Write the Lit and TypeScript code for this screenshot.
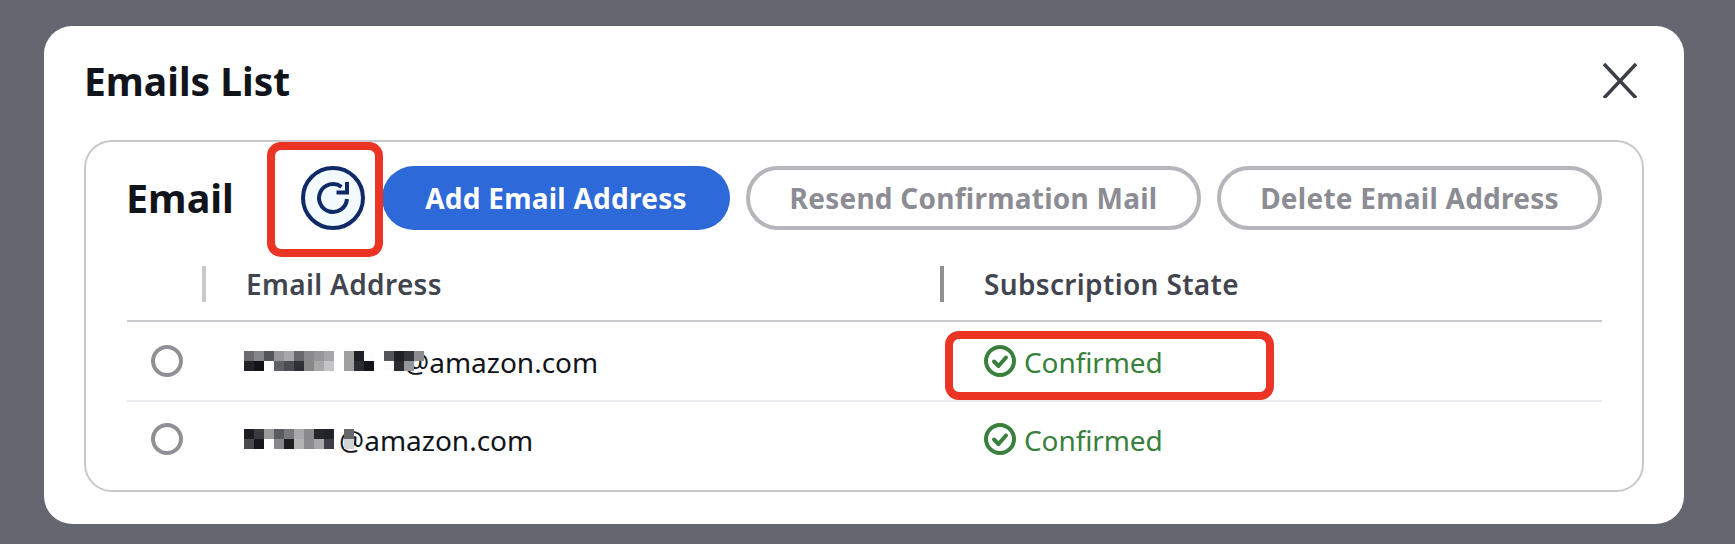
import { LitElement, html, css } from "lit";
import { customElement } from "lit/decorators.js";

type Cell = string | null;
const M1: Cell[][] = [
  ["#6a6b6f","#85868a","#55565b","#97979b","#a8a8aa","#66686c","#8a8a8c","#969698","#a5a5a7",null,"#a0a0a2","#1e2026","#fbfcfc",null,"#55565b","#1e2026","#33353a","#8c8c90"],
  ["#202228","#111318","#ffffff","#606165","#4c4d52","#2e3035","#88888a","#a8a8a8","#c4c4c6",null,"#a0a0a2","#2a2c31","#13151a",null,"#fcfcfc","#2a2c31","#97979b",null],
];
const M2: Cell[][] = [
  ["#1c1d22","#3a3b40","#9b9b9d","#5a5b60","#78797c","#a8a8aa","#8a8a8c","#26272c","#22242a",null,"#66686c"],
  ["#484a4f","#16171c","#ffffff","#88888c","#1d1e22","#b4b4b4","#8c8c90","#a8a8aa","#3c3e44",null,"#d0d2d4"],
];

@customElement("app-root")
export class AppRoot extends LitElement {
  static styles = css`
    :host { display: block; width: 1735px; height: 544px; background: #646770; font-family: "Noto Sans", "Open Sans", sans-serif; overflow: hidden; }
    .page { padding: 26px 51px 20px 44px; }
    .modal { background: #fff; border-radius: 28px; height: 498px; box-sizing: border-box; padding: 0 40px; }
    .head { height: 114px; display: flex; align-items: center; justify-content: space-between; box-sizing: border-box; padding-bottom: 4px; }
    h1 { margin: 0; font-size: 39px; font-weight: 700; line-height: 50px; color: #11151b; }
    .close { width: 36px; height: 36px; margin-right: 6px; display: block; position: relative; top: -1px; }
    .card { border: 2px solid #c8c8ce; border-radius: 28px; height: 352px; box-sizing: border-box; padding: 24px 40px 0 41px; }
    .toolbar { display: flex; align-items: center; height: 64px; }
    h2 { margin: 0 0 0 -1px; font-size: 39.5px; font-weight: 700; color: #11151b; width: 175px; line-height: 64px; }
    .refresh { position: relative; width: 64px; height: 64px; margin-right: 17px; }
    .refresh svg { display: block; }
    .box { position: absolute; border: 8px solid #ec3424; border-radius: 14px; box-sizing: border-box; pointer-events: none; }
    .box.a { left: -34px; top: -24px; width: 116px; height: 115px; }
    .box.b { left: 5px; top: -12px; width: 329px; height: 69px; }
    .btn { height: 64px; box-sizing: border-box; border-radius: 32px; display: flex; align-items: center; justify-content: center; font-size: 28px; font-weight: 700; letter-spacing: 0.25px; }
    .primary { background: #2d69d9; color: #fff; width: 348px; }
    .ghost { border: 4px solid #b5b5bb; color: #8c8c94; margin-left: 16px; }
    .w1 { width: 455px; }
    .w2 { width: 385px; }
    .thead, .row { display: grid; grid-template-columns: 75px 738px 1fr; }
    .thead { height: 54px; margin-top: 36px; border-bottom: 2px solid #c8c8ce; align-items: start; }
    .th { height: 36px; box-sizing: border-box; padding-left: 40px; font-size: 28px; font-weight: 600; letter-spacing: 0.34px; color: #42454f; display: flex; align-items: center; }
    .th.light { border-left: 4px solid #c8c8ce; }
    .th.dark { border-left: 4px solid #8f8f96; }
    .row { align-items: center; font-size: 28px; color: #11151b; }
    .r1 { height: 78px; border-bottom: 2px solid #ecebf0; }
    .r2 { height: 74px; }
    .radio { width: 32px; height: 32px; box-sizing: border-box; border: 4px solid #8f8f96; border-radius: 50%; margin-left: 24px; }
    .email { display: flex; align-items: center; padding-left: 42px; line-height: 36px; }
    .mosaic { display: grid; grid-auto-rows: 10px; grid-auto-columns: 10px; position: relative; z-index: 1; flex: none; }
    .mosaic i { display: block; width: 10px; height: 10px; }
    .addr { position: relative; top: 1px; }
    .addr.a1 { margin-left: -20px; }
    .addr.a2 { margin-left: -15px; }
    .state { display: flex; align-items: center; gap: 8px; color: #38803c; padding-left: 44px; position: relative; line-height: 36px; }
    .state svg { flex: none; display: block; }
    .state span { position: relative; top: 1px; letter-spacing: -0.1px; }
  `;

  mosaic(m: Cell[][]) {
    return html`<div class="mosaic">${m.map((r, y) =>
      r.map((c, x) =>
        html`<i style="grid-row:${y + 1};grid-column:${x + 1};background:${c ?? "transparent"}"></i>`))}</div>`;
  }

  check() {
    return html`<svg width="32" height="32" viewBox="0 0 32 32" fill="none" stroke="#38803c">
      <circle cx="16" cy="16" r="14" stroke-width="4"></circle>
      <path d="M10 16.5l4.5 4.5 7.5-8.5" stroke-width="4" stroke-linecap="round" stroke-linejoin="round"></path>
    </svg>`;
  }

  render() {
    return html`<div class="page"><div class="modal">
      <div class="head">
        <h1>Emails List</h1>
        <svg class="close" viewBox="0 0 36 36" fill="none" stroke="#3c3f48" stroke-width="3.5">
          <path d="M2 2l32 34M34 2L2 36"></path>
        </svg>
      </div>
      <div class="card">
        <div class="toolbar">
          <h2>Email</h2>
          <div class="refresh">
            <svg width="64" height="64" viewBox="0 0 64 64" fill="none" stroke="#0f2a66" stroke-width="4">
              <circle cx="32" cy="32" r="30" fill="#f2faff"></circle>
              <path d="M40.5 20.8A14 14 0 1 0 46 33"></path>
              <path d="M46 16V26.5H35.5"></path>
            </svg>
            <div class="box a"></div>
          </div>
          <div class="btn primary">Add Email Address</div>
          <div class="btn ghost w1">Resend Confirmation Mail</div>
          <div class="btn ghost w2">Delete Email Address</div>
        </div>
        <div class="thead">
          <div></div>
          <div class="th light">Email Address</div>
          <div class="th dark">Subscription State</div>
        </div>
        <div class="row r1">
          <div class="radio"></div>
          <div class="email">${this.mosaic(M1)}<span class="addr a1">@amazon.com</span></div>
          <div class="state">${this.check()}<span>Confirmed</span><div class="box b"></div></div>
        </div>
        <div class="row r2">
          <div class="radio"></div>
          <div class="email">${this.mosaic(M2)}<span class="addr a2">@amazon.com</span></div>
          <div class="state">${this.check()}<span>Confirmed</span></div>
        </div>
      </div>
    </div></div>`;
  }
}
